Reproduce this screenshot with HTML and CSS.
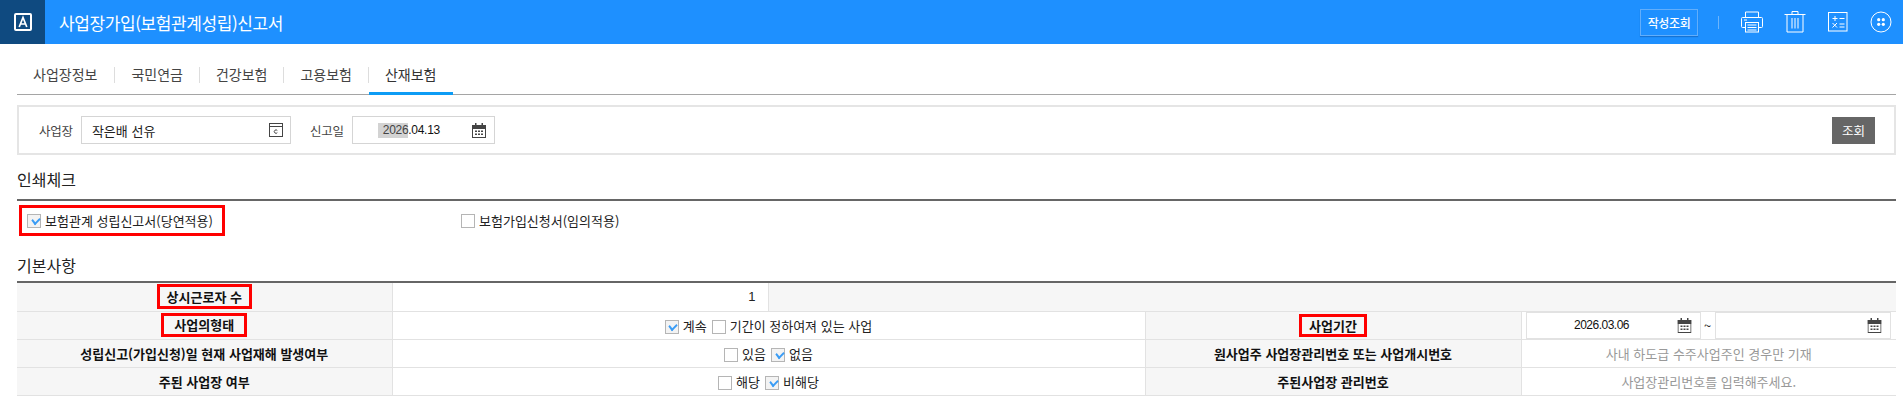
FILE: index.html
```html
<!DOCTYPE html>
<html lang="ko">
<head>
<meta charset="utf-8">
<title>사업장가입(보험관계성립)신고서</title>
<link rel="stylesheet" href="styles.css">
</head>
<body>
<header class="topbar">
  <div class="logo-box">
    <svg class="logo" width="18" height="18" viewBox="0 0 18 18"><rect x="1" y="1" width="16" height="16" rx="1" fill="none" stroke="#fff" stroke-width="2"/><path d="M5.2 14 9 4.5 12.8 14M6.4 11h5.2" fill="none" stroke="#fff" stroke-width="1.7"/></svg>
  </div>
  <h1 class="page-title">사업장가입(보험관계성립)신고서</h1>
  <div class="top-actions">
    <button class="ghost-btn">작성조회</button>
    <span class="top-sep"></span>
    <svg class="ico ico-print" width="22" height="22" viewBox="0 0 22 22" fill="none" stroke="#fff" stroke-width="1"><path d="M4.5 6.5V1h13v5.5"/><path d="M4.500 16.500H1.500a1 1 0 0 1-1-1V7.500a1 1 0 0 1 1-1h19a1 1 0 0 1 1 1v8a1 1 0 0 1-1 1h-3"/><rect x="4.500" y="11.500" width="13" height="9.500"/><path d="M6.500 14h9M6.500 16.500h9M6.500 19h9M3 9h3"/></svg>
    <svg class="ico ico-trash" width="22" height="22" viewBox="0 0 22 22" fill="none" stroke="#fff" stroke-width="1"><path d="M.5 3.500h21M8 3.500V.5h6v3M3 3.500v17.500h16V3.500M8 7v10.500M11 7v10.500M14 7v10.500"/></svg>
    <svg class="ico ico-calc" width="20" height="20" viewBox="0 0 20 20" fill="none" stroke="#fff" stroke-width="1"><rect x=".5" y=".5" width="18.500" height="18.500"/><path d="M4.500 6.500h5M7 4v5M11.500 6.500h5M4.500 11l4.500 4.500M9 11l-4.500 4.500M11.500 12h5M11.500 15h5"/></svg>
    <svg class="ico ico-more" width="22" height="22" viewBox="0 0 22 22"><circle cx="11" cy="11" r="10" fill="none" stroke="#fff" stroke-width="1"/><circle cx="8.700" cy="8.700" r="1.600" fill="#fff"/><circle cx="13.300" cy="8.700" r="1.600" fill="#fff"/><circle cx="8.700" cy="13.300" r="1.600" fill="#fff"/><circle cx="13.300" cy="13.300" r="1.600" fill="#fff"/></svg>
  </div>
</header>

<main class="content">
  <nav class="tabs">
    <a class="tab">사업장정보</a>
    <a class="tab">국민연금</a>
    <a class="tab">건강보험</a>
    <a class="tab">고용보험</a>
    <a class="tab active">산재보험</a>
  </nav>

  <section class="search">
    <label class="search-label">사업장</label>
    <div class="field field-biz">
      <span>작은배 선유</span>
      <svg width="14" height="14" viewBox="0 0 14 14" fill="none" stroke="#444" stroke-width="1"><rect x=".5" y=".5" width="13" height="13"/><path d="M.5 3.500h13"/><path d="M8.300 7.500a1.700 1.700 0 1 0 0 2.200" /></svg>
    </div>
    <label class="search-label label-date">신고일</label>
    <div class="field field-date">
      <span class="date-text"><span class="selected">2026</span>.04.13</span>
      <svg class="cal" width="14" height="15" viewBox="0 0 14 15"><use href="#cal-icon"/></svg>
    </div>
    <button class="search-btn">조회</button>
  </section>

  <h2 class="section-title first">인쇄체크</h2>
  <div class="print-row">
    <div class="print-cell">
      <span class="flag flag-print"><i class="cb on"></i><span>보험관계 성립신고서(당연적용)</span></span>
    </div>
    <div class="print-cell">
      <span class="plain"><i class="cb"></i><span>보험가입신청서(임의적용)</span></span>
    </div>
  </div>

  <h2 class="section-title second">기본사항</h2>
  <table class="info">
    <colgroup><col class="c1"><col class="c2"><col class="c3"><col class="c4"><col class="c5"></colgroup>
    <tr>
      <th><span class="flag flag-a">상시근로자 수</span></th>
      <td class="num">1</td>
      <td colspan="3" class="blank"></td>
    </tr>
    <tr>
      <th><span class="flag flag-b">사업의형태</span></th>
      <td colspan="2" class="center"><i class="cb on"></i>계속<i class="cb"></i>기간이 정하여져 있는 사업</td>
      <th><span class="flag flag-c">사업기간</span></th>
      <td class="range">
        <div class="range-box">
          <div class="field field-range"><span class="date-text">2026.03.06</span><svg class="cal" width="15" height="15" viewBox="0 0 14 15"><use href="#cal-icon"/></svg></div>
          <span class="tilde">~</span>
          <div class="field field-range wide"><span class="date-text"></span><svg class="cal" width="15" height="15" viewBox="0 0 14 15"><use href="#cal-icon"/></svg></div>
        </div>
      </td>
    </tr>
    <tr>
      <th>성립신고(가입신청)일 현재 사업재해 발생여부</th>
      <td colspan="2" class="center"><i class="cb"></i>있음<i class="cb on"></i>없음</td>
      <th>원사업주 사업장관리번호 또는 사업개시번호</th>
      <td class="hint">사내 하도급 수주사업주인 경우만 기재</td>
    </tr>
    <tr>
      <th>주된 사업장 여부</th>
      <td colspan="2" class="center"><i class="cb"></i>해당<i class="cb on"></i>비해당</td>
      <th>주된사업장 관리번호</th>
      <td class="hint">사업장관리번호를 입력해주세요.</td>
    </tr>
  </table>
</main>

<svg class="defs" width="0" height="0">
  <symbol id="cal-icon" viewBox="0 0 14 15">
    <path d="M3 0h1.500v2H3zM9.500 0H11v2H9.500z" fill="#444"/>
    <path d="M0 2h14v4H0z" fill="#444"/>
    <rect x=".5" y="2.500" width="13" height="12" fill="none" stroke="#444"/>
    <path d="M3 7.500h2v1.500H3zM6 7.500h2v1.500H6zM9 7.500h2v1.500H9zM3 10.500h2V12H3zM6 10.500h2V12H6zM9 10.500h2V12H9z" fill="#444"/>
  </symbol>
</svg>
</body>
</html>
```
FILE: styles.css
```css
* { box-sizing: border-box; }
html, body { margin: 0; padding: 0; }
body {
  font-family: "Noto Sans CJK KR", "Noto Sans", sans-serif;
  font-size: 13px;
  color: #222;
  background: #fff;
}
.topbar {
  display: flex;
  align-items: center;
  height: 44px;
  background: #1e90ff;
  color: #fff;
}
.logo-box {
  width: 45px;
  height: 44px;
  background: #0f4a80;
  display: flex;
  align-items: center;
  justify-content: center;
}
.page-title {
  margin: 0 0 0 14px;
  font-size: 17px;
  font-weight: 400;
  letter-spacing: -0.4px;
}
.top-actions {
  margin-left: auto;
  display: flex;
  align-items: center;
  padding-right: 11px;
}
.ghost-btn {
  width: 58px;
  height: 27px;
  padding: 0;
  background: transparent;
  border: 1px solid #62aefb;
  box-shadow: 0 1px 1px rgba(10, 80, 160, 0.45);
  color: #fff;
  font: inherit;
  font-size: 12px;
  font-weight: 500;
  letter-spacing: -0.4px;
}
.top-sep { width: 1px; height: 13px; background: #6db5fc; margin: 0 22px 0 20px; }
.ico { display: block; flex: none; }
.ico-trash { margin-left: 21px; }
.ico-calc { margin-left: 22px; }
.ico-more { margin-left: 22px; }

.content { padding: 0 7px 0 17px; }
.tabs {
  display: flex;
  height: 51px;
  padding-top: 20px;
  border-bottom: 1px solid #a5a5a5;
}
.tab {
  position: relative;
  width: 84.500px;
  height: 31px;
  font-size: 14px;
  line-height: 20px;
  color: #444;
  text-align: center;
}
.tab:first-child { width: 98px; text-align: left; padding-left: 16px; }
.tab:not(:last-child)::after {
  content: "";
  position: absolute;
  right: 0;
  top: 3px;
  width: 1px;
  height: 16px;
  background: #ddd;
}
.tab.active {
  color: #333;
  border-bottom: 3px solid #0d9cf5;
  height: 31px;
  margin-bottom: -1px;
}
.search {
  display: flex;
  align-items: center;
  height: 50px;
  margin-top: 10px;
  border: 2px solid #e5e5e5;
  padding-right: 19px;
}
.search-label {
  font-size: 12.500px;
  color: #444;
  margin-left: 20px;
  margin-right: 8px;
  letter-spacing: -0.2px;
}
.field {
  display: flex;
  align-items: center;
  height: 28px;
  border: 1px solid #d5d5d5;
  background: #fff;
}
.field-biz {
  width: 210px;
  justify-content: space-between;
  padding: 0 7px 0 10px;
  font-size: 13px;
  color: #222;
}
.field-date {
  width: 143px;
  padding-right: 8px;
}
.label-date { margin-left: 19px; }
.date-text {
  flex: 1;
  text-align: center;
  font-family: "Liberation Sans", sans-serif;
  font-size: 12px;
  color: #111;
  letter-spacing: -0.5px;
}
.field-date .date-text { text-align: left; padding-left: 25px; letter-spacing: -0.3px; }
.selected { background: #d3d3d3; color: #444; display: inline-block; padding-left: 5px; line-height: 15px; }
.cal { display: block; flex: none; }
.search-btn {
  margin-left: auto;
  width: 43px;
  height: 27px;
  padding: 0;
  border: 0;
  background: #666;
  color: #fff;
  font: inherit;
  font-size: 12.500px;
}
.section-title {
  margin: 0;
  font-size: 16px;
  font-weight: 400;
  color: #222;
  line-height: 20px;
  border-bottom: 2px solid #666;
}
.section-title.first { margin-top: 14px; padding-bottom: 10px; }
.section-title.second { margin-top: 15px; padding-bottom: 6px; }
.print-row {
  display: flex;
  height: 39px;
  align-items: flex-start;
  padding-top: 4px;
  padding-left: 2px;
}
.print-cell { width: 442px; }
.flag { display: inline-block; border: 3px solid #f00; }
.flag-print { display: inline-flex; align-items: center; width: 206px; height: 31px; padding-left: 5px; gap: 4px; white-space: nowrap; }
.plain { display: inline-flex; align-items: center; height: 31px; gap: 4px; }
.flag-a { width: 95px; height: 25px; line-height: 19px; }
.flag-b { width: 86px; height: 24px; line-height: 18px; }
.flag-c { width: 68px; height: 23px; line-height: 17px; }
.cb {
  display: inline-block;
  width: 14px;
  height: 14px;
  border: 1px solid #b5b5b5;
  background: #fff;
  vertical-align: -3px;
  position: relative;
}
td > .cb { margin-right: 4px; }
td > .cb:not(:first-child) { margin-left: 5px; }
.cb.on { background: #f3f3f3; }
.cb.on::after {
  content: "";
  position: absolute;
  left: 3.500px;
  top: 2px;
  width: 6px;
  height: 4px;
  transform: rotate(-45deg) skew(-8deg);
  border-left: 2px solid #3a9cf5;
  border-bottom: 2px solid #3a9cf5;
}
.info {
  width: 100%;
  border-collapse: collapse;
  table-layout: fixed;
}
.c1 { width: 375px; }
.c2 { width: 376px; }
.c3 { width: 377px; }
.c4 { width: 376px; }
.c5 { width: 375px; }
.info th, .info td {
  height: 28px;
  padding: 0;
  border-bottom: 1px solid #e2e2e2;
  font-size: 13px;
  text-align: center;
  white-space: nowrap;
}
.info th {
  background: #f6f6f6;
  font-weight: 700;
  color: #111;
  border-right: 1px solid #e2e2e2;
}
.info td { border-right: 1px solid #e2e2e2; }
.info td:last-child { border-right: 0; }
.num { text-align: right !important; padding-right: 12px !important; font-family: "Liberation Sans", sans-serif; }
.blank { background: #f6f6f6; }
.center { color: #222; }
.hint { color: #999; }
.range-box { display: flex; align-items: center; height: 27px; padding-left: 4px; }
.field-range { width: 175px; height: 27px; padding-right: 8px; border-color: #e2e2e2; }
.field-range.wide { width: 176px; }
.tilde { width: 14px; text-align: center; }
.defs { position: absolute; }
```
